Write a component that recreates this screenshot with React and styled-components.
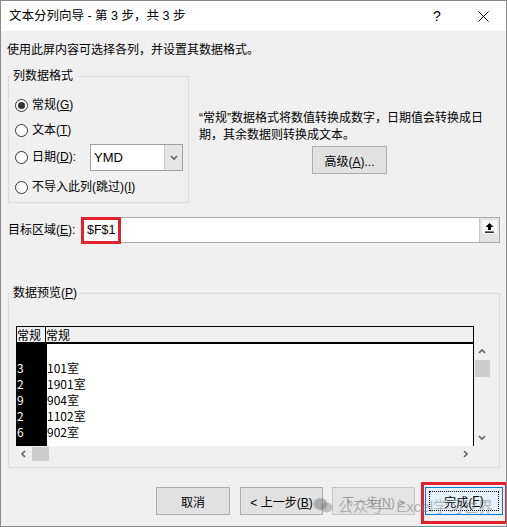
import React from "react";
import styled, { createGlobalStyle } from "styled-components";

const UI_FONT = `"Liberation Sans", "Noto Sans CJK SC", sans-serif`;
const GRID_FONT = `"Noto Sans CJK SC", "Liberation Sans", sans-serif`;

const GlobalStyle = createGlobalStyle`
  * { box-sizing: border-box; }
  html, body { margin: 0; padding: 0; background: #f0f0f0; }
  body { font-family: ${UI_FONT}; }
`;

const Window = styled.div`
  position: relative;
  width: 507px;
  height: 527px;
  border: 1px solid #8a8a8a;
  background: #f0f0f0;
  font-family: ${UI_FONT};
  font-size: 12px;
  color: #000;
  overflow: hidden;
`;

const TitleBar = styled.div`
  display: flex;
  align-items: center;
  height: 30px;
  background: #fff;
  padding-left: 8px;
`;

const TitleText = styled.div`
  flex: 1;
  font-size: 12.5px;
  line-height: 30px;
  white-space: nowrap;
`;

const CaptionButton = styled.div`
  width: 46px;
  height: 30px;
  display: flex;
  align-items: center;
  justify-content: center;
  font-size: 14px;
`;

const Body = styled.div`
  padding: 0 6px 0 7px;
`;

const Intro = styled.div`
  margin: 11px 0 0 -1px;
  line-height: 17px;
  white-space: nowrap;
`;

const TopSection = styled.div`
  display: flex;
  align-items: flex-start;
  margin-top: 17px;
`;

const GroupBox = styled.div`
  position: relative;
  width: ${(p) => (p.width ? `${p.width}px` : "auto")};
  border: 1px solid #dcdcdc;
  padding: ${(p) => p.pad};
`;

const Legend = styled.span`
  position: absolute;
  top: -9px;
  left: 2px;
  padding: 0 2px;
  line-height: 17px;
  background: #f0f0f0;
  white-space: nowrap;
`;

const OptionRow = styled.div`
  display: flex;
  align-items: center;
  height: ${(p) => p.h}px;
`;

const Radio = styled.span`
  flex: none;
  width: 13px;
  height: 13px;
  border: 1px solid #333;
  border-radius: 50%;
  background: #fff;
  display: inline-flex;
  align-items: center;
  justify-content: center;

  &::after {
    content: "";
    width: 7px;
    height: 7px;
    border-radius: 50%;
    background: ${(p) => (p.checked ? "#333" : "transparent")};
  }
`;

const OptionLabel = styled.span`
  margin-left: 4px;
  line-height: 17px;
  white-space: nowrap;
`;

const Key = styled.u`
  text-underline-offset: 1px;
`;

const Combo = styled.div`
  display: flex;
  margin-left: auto;
  width: 93px;
  height: 27px;
  border: 1px solid #a0a0a0;
  background: #fff;
`;

const ComboText = styled.span`
  flex: 1;
  padding-left: 3px;
  font-size: 13px;
  line-height: 25px;
`;

const ComboArrow = styled.span`
  width: 18px;
  display: flex;
  align-items: center;
  justify-content: center;
  background: #e6e6e6;
  border-left: 1px solid #c8c8c8;
`;

const Explain = styled.div`
  margin-left: 10px;
  padding-top: 34px;
`;

const ExplainText = styled.div`
  line-height: 17px;
  white-space: nowrap;
`;

const PushButton = styled.button`
  position: relative;
  flex: none;
  width: ${(p) => p.w}px;
  height: 28px;
  margin: ${(p) => p.m || 0};
  padding: ${(p) => (p.primary ? "3px" : "0")};
  font-family: ${UI_FONT};
  font-size: 12px;
  color: ${(p) => (p.disabled ? "#9a9a9a" : "#000")};
  background: ${(p) => (p.primary ? "#e5f1fb" : p.disabled ? "#e4e4e4" : "#e1e1e1")};
  border: 1px solid ${(p) => (p.primary ? "#0078d7" : p.disabled ? "#c4c4c4" : "#adadad")};
  white-space: nowrap;
`;

const FocusRect = styled.span`
  display: flex;
  align-items: center;
  justify-content: center;
  width: 100%;
  height: 100%;
  border: 1px dotted #000;
`;

const TargetRow = styled.div`
  display: flex;
  align-items: center;
  margin-top: 14px;
  height: 26px;
`;

const TargetLabel = styled.span`
  width: 73px;
  line-height: 17px;
  white-space: nowrap;
`;

const TargetInput = styled.div`
  position: relative;
  flex: 1;
  display: flex;
  height: 26px;
  border: 1px solid #ababab;
  background: #fff;
`;

const InputText = styled.span`
  flex: 1;
  padding-left: 5px;
  font-size: 12.5px;
  line-height: 24px;
`;

const RefButton = styled.span`
  width: 20px;
  display: flex;
  justify-content: center;
  padding-top: 2px;
  background: #e4e4e4;
  border-left: 1px solid #c8c8c8;
`;

const RefIcon = styled.span`
  width: 15px;
  height: 14px;
  display: flex;
  align-items: center;
  justify-content: center;
  background: #fafafa;
`;

const RedMark = styled.span`
  position: absolute;
  top: ${(p) => p.t}px;
  left: ${(p) => p.l}px;
  right: ${(p) => p.r}px;
  bottom: ${(p) => p.b}px;
  border: 3px solid #e3202b;
  pointer-events: none;
`;

const PreviewGrid = styled.div`
  display: grid;
  grid-template-columns: 458px 17px;
  grid-template-rows: 18px 102px 16px;
  font-family: ${GRID_FONT};
  font-size: 12px;
`;

const HeaderRow = styled.div`
  display: flex;
  border: 1px solid #000;
  border-bottom: 2px solid #000;
  background: #f0f0f0;
  line-height: 15px;
`;

const HeaderCell = styled.span`
  width: ${(p) => (p.w ? `${p.w}px` : "auto")};
  flex: ${(p) => (p.w ? "none" : 1)};
  border-right: ${(p) => (p.sep ? "1px solid #000" : "none")};
  white-space: nowrap;
  overflow: hidden;
`;

const GridBody = styled.div`
  display: flex;
  border-left: 1px solid #000;
  border-right: 1px solid #000;
  background: #fff;
  overflow: hidden;
`;

const GridColumn = styled.div`
  width: ${(p) => (p.w ? `${p.w}px` : "auto")};
  flex: ${(p) => (p.w ? "none" : 1)};
  background: ${(p) => (p.dark ? "#000" : "#fff")};
  color: ${(p) => (p.dark ? "#fff" : "#000")};
`;

const GridCell = styled.div`
  height: 16px;
  line-height: 16px;
  white-space: nowrap;
`;

const ScrollBar = styled.div`
  display: flex;
  flex-direction: ${(p) => (p.vertical ? "column" : "row")};
  background: #f0f0f0;
`;

const ScrollArrow = styled.span`
  flex: none;
  width: 16px;
  height: 16px;
  display: flex;
  align-items: center;
  justify-content: center;
`;

const ScrollThumb = styled.span`
  flex: none;
  background: #cdcdcd;
  ${(p) => (p.vertical ? "height: 17px; margin: 0 1px;" : "width: 17px; margin: 1px 0;")}
`;

const Spacer = styled.span`
  flex: 1;
`;

const ButtonRow = styled.div`
  display: flex;
  justify-content: flex-end;
  margin: 19px -3px 0 0;
`;

const MarkWrap = styled.span`
  position: relative;
  display: inline-flex;
  margin-left: 10px;
`;

const Watermark = styled.div`
  position: absolute;
  left: 312px;
  top: 494px;
  display: flex;
  align-items: center;
  gap: 5px;
  font-family: ${UI_FONT};
  font-size: 15px;
  color: rgba(120, 120, 120, 0.5);
  white-space: nowrap;
  pointer-events: none;
`;

const Chevron = ({ dir }) => {
  const pts = {
    up: "1,5 4,2 7,5",
    down: "1,2 4,5 7,2",
    left: "5,1 2,4 5,7",
    right: "2,1 5,4 2,7",
  }[dir];
  return (
    <svg width="8" height="8" viewBox="0 0 8 8">
      <polyline points={pts} fill="none" stroke="#606060" strokeWidth="1.6" />
    </svg>
  );
};

const CloseIcon = () => (
  <svg width="11" height="11" viewBox="0 0 11 11">
    <path d="M0.5 0.5 L10.5 10.5 M10.5 0.5 L0.5 10.5" stroke="#000" strokeWidth="1" />
  </svg>
);

const UploadIcon = () => (
  <svg width="11" height="11" viewBox="0 0 11 11">
    <path d="M5.5 1 L1.5 5 H4 V8 H7 V5 H9.5 Z" fill="#000" />
    <rect x="1" y="9.5" width="9" height="1.3" fill="#000" />
  </svg>
);

const WeChatIcon = () => (
  <svg width="20" height="17" viewBox="0 0 20 17">
    <ellipse cx="7.5" cy="7" rx="7" ry="6" fill="currentColor" />
    <ellipse cx="13.5" cy="10.5" rx="6" ry="5" fill="currentColor" opacity="0.8" />
  </svg>
);

const formats = [
  { label: "常规", key: "G", h: 24, checked: true },
  { label: "文本", key: "T", h: 26 },
  { label: "日期", key: "D", h: 29, suffix: ":", combo: true },
  { label: "不导入此列(跳过)", key: "I", h: 30 },
];

const rows = [
  ["", ""],
  ["3", "101室"],
  ["2", "1901室"],
  ["9", "904室"],
  ["2", "1102室"],
  ["6", "902室"],
  ["", ""],
];

function App() {
  return (
    <>
      <GlobalStyle />
      <Window>
        <TitleBar>
          <TitleText>文本分列向导 - 第 3 步，共 3 步</TitleText>
          <CaptionButton>?</CaptionButton>
          <CaptionButton>
            <CloseIcon />
          </CaptionButton>
        </TitleBar>

        <Body>
          <Intro>使用此屏内容可选择各列，并设置其数据格式。</Intro>

          <TopSection>
            <GroupBox width={181} pad="16px 5px 0 6px">
              <Legend>列数据格式</Legend>
              {formats.map((f) => (
                <OptionRow key={f.key} h={f.h}>
                  <Radio checked={f.checked} />
                  <OptionLabel>
                    {f.label}(<Key>{f.key}</Key>){f.suffix}
                  </OptionLabel>
                  {f.combo && (
                    <Combo>
                      <ComboText>YMD</ComboText>
                      <ComboArrow>
                        <Chevron dir="down" />
                      </ComboArrow>
                    </Combo>
                  )}
                </OptionRow>
              ))}
            </GroupBox>

            <Explain>
              <ExplainText>
                “常规”数据格式将数值转换成数字，日期值会转换成日
                <br />
                期，其余数据则转换成文本。
              </ExplainText>
              <PushButton w={75} m="2px 0 0 113px">
                高级(<Key>A</Key>)...
              </PushButton>
            </Explain>
          </TopSection>

          <TargetRow>
            <TargetLabel>
              目标区域(<Key>E</Key>):
            </TargetLabel>
            <TargetInput>
              <InputText>$F$1</InputText>
              <RefButton>
                <RefIcon>
                  <UploadIcon />
                </RefIcon>
              </RefButton>
              <RedMark t={-1} l={-1} b={-2} r={378} />
            </TargetInput>
          </TargetRow>

          <GroupBox pad="32px 0 5px 7px" style={{ marginTop: 50 }}>
            <Legend>
              数据预览(<Key>P</Key>)
            </Legend>
            <PreviewGrid>
              <HeaderRow>
                <HeaderCell w={29} sep>
                  常规
                </HeaderCell>
                <HeaderCell>常规</HeaderCell>
              </HeaderRow>
              <span />
              <GridBody>
                <GridColumn w={30} dark>
                  {rows.map((r, i) => (
                    <GridCell key={i}>{r[0]}</GridCell>
                  ))}
                </GridColumn>
                <GridColumn>
                  {rows.map((r, i) => (
                    <GridCell key={i}>{r[1]}</GridCell>
                  ))}
                </GridColumn>
              </GridBody>
              <ScrollBar vertical>
                <ScrollArrow>
                  <Chevron dir="up" />
                </ScrollArrow>
                <ScrollThumb vertical />
                <Spacer />
                <ScrollArrow>
                  <Chevron dir="down" />
                </ScrollArrow>
              </ScrollBar>
              <ScrollBar>
                <ScrollArrow>
                  <Chevron dir="left" />
                </ScrollArrow>
                <ScrollThumb />
                <Spacer />
                <ScrollArrow>
                  <Chevron dir="right" />
                </ScrollArrow>
              </ScrollBar>
              <span />
            </PreviewGrid>
          </GroupBox>

          <ButtonRow>
            <PushButton w={74}>取消</PushButton>
            <PushButton w={83} m="0 0 0 10px">
              &lt; 上一步(<Key>B</Key>)
            </PushButton>
            <PushButton w={83} m="0 0 0 9px" disabled>
              下一步(<Key>N</Key>) &gt;
            </PushButton>
            <MarkWrap>
              <PushButton w={78} primary>
                <FocusRect>
                  完成(<Key>F</Key>)
                </FocusRect>
              </PushButton>
              <RedMark t={-5} l={-4} b={-9} r={-5} />
            </MarkWrap>
          </ButtonRow>
        </Body>

        <Watermark>
          <WeChatIcon />
          <span>公众号 · Excel学习世界</span>
        </Watermark>
      </Window>
    </>
  );
}

export default App;
